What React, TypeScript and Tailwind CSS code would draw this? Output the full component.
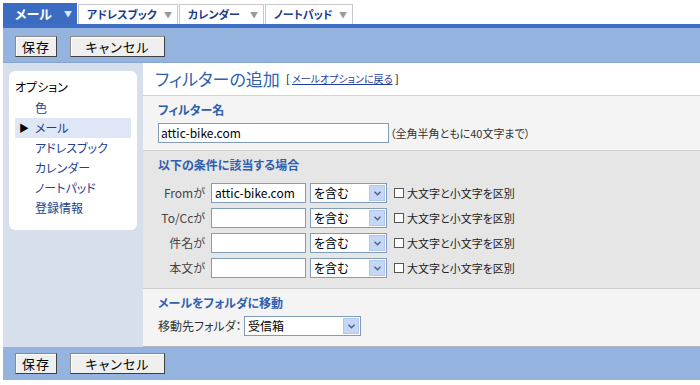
import React from "react";

const font = { fontFamily: '"Noto Sans CJK JP", "Liberation Sans", sans-serif' };

function Tab({ label, active, width }: { label: string; active?: boolean; width: string }) {
  return (
    <div
      className={
        active
          ? `${width} h-[21px] bg-[#3c6cc2] flex items-center justify-between pl-[12px] pr-[5px] text-white font-bold text-[13px] whitespace-nowrap`
          : `${width} h-[20px] bg-white border border-b-0 border-[#c8c8c8] flex items-center justify-between pl-[8px] pr-[5px] text-[#1c3a8c] font-bold text-[11px] whitespace-nowrap`
      }
    >
      <span className="leading-none">{label}</span>
      <span className={active ? "text-[8px] text-[#dce6f7]" : "text-[8px] text-[#9a9a9a]"}>▼</span>
    </div>
  );
}

function Btn({ label, width }: { label: string; width: string }) {
  return (
    <button
      className={`${width} h-[21px] bg-[#efefef] border border-[#8a8a8a] border-r-[#404040] border-b-[#404040] shadow-[inset_1px_1px_0_#ffffff] text-[13px] text-black leading-none flex items-center justify-center tracking-[1px]`}
    >
      {label}
    </button>
  );
}

function Select({ value, width }: { value: string; width: string }) {
  return (
    <div className={`${width} h-[20px] bg-white border border-[#7f9db9] flex items-center justify-between`}>
      <span className="pl-[3px] text-[12px] leading-none text-black">{value}</span>
      <span className="w-[16px] h-[16px] mr-[1px] bg-[#c6d6f7] border border-[#b2c6ee] flex items-center justify-center">
        <svg width="7" height="5" viewBox="0 0 7 5">
          <path d="M0.5 0.8 L3.5 3.8 L6.5 0.8" stroke="#4d6185" strokeWidth="1.4" fill="none" />
        </svg>
      </span>
    </div>
  );
}

function CondRow({ label, value }: { label: string; value?: string }) {
  return (
    <div className="flex items-center h-[20px]">
      <span className="w-[49px] text-right text-[12px] text-[#444] leading-none pr-[2px] whitespace-nowrap">{label}</span>
      <div className="ml-[4px] w-[95px] h-[20px] bg-white border border-[#7f9db9] flex items-center pl-[3px] text-[12px] leading-none text-black">
        {value}
      </div>
      <div className="ml-[4px]">
        <Select value="を含む" width="w-[77px]" />
      </div>
      <span className="ml-[7px] w-[10px] h-[10px] bg-white border border-[#555]" />
      <span className="ml-[3px] text-[11px] leading-none text-[#222] whitespace-nowrap">大文字と小文字を区別</span>
    </div>
  );
}

export default function App() {
  const nav = ["色", "メール", "アドレスブック", "カレンダー", "ノートパッド", "登録情報"];
  return (
    <div className="w-[700px] h-[385px] bg-white pl-[3px] overflow-hidden [font-feature-settings:'palt']" style={font}>
      <div className="h-[24px] flex items-end gap-[1px]">
        <Tab label="メール" active width="w-[74px]" />
        <Tab label="アドレスブック" width="w-[100px]" />
        <Tab label="カレンダー" width="w-[85px]" />
        <Tab label="ノートパッド" width="w-[88px]" />
      </div>

      <div className="border-t-[4px] border-t-[#3e6ec3] border-b border-b-[#88a4d0] bg-[#95b3df] h-[39px] flex items-center gap-[13px] pl-[12px] pt-[2px]">
        <Btn label="保存" width="w-[42px]" />
        <Btn label="キャンセル" width="w-[95px]" />
      </div>

      <div className="flex h-[284px]">
        <div className="w-[140px] bg-[#d7dfed] pt-[8px] pl-[6px]">
          <div className="w-[128px] h-[159px] bg-white rounded-[6px] pt-[8px] px-[6px]">
            <div className="text-[12px] text-black leading-none h-[16px] flex items-center">オプション</div>
            <div className="mt-[3px]">
              {nav.map((n) => (
                <div
                  key={n}
                  className={`h-[20px] flex items-center text-[12px] leading-none text-[#1f3f8f] ${
                    n === "メール" ? "bg-[#dfe7f6]" : ""
                  }`}
                >
                  <span className="w-[20px] pl-[4px] text-[10px] text-black">{n === "メール" ? "▶" : ""}</span>
                  {n}
                </div>
              ))}
            </div>
          </div>
        </div>

        <div className="flex-1 flex flex-col">
          <div className="h-[33px] bg-white border-b border-[#d2d2d2] flex items-center pl-[12px] gap-[6px] pb-[2px]">
            <span className="text-[17px] text-[#2f5fae] leading-none">フィルターの追加</span>
            <span className="text-[11px] text-black leading-none">
              [ <span className="text-[10px] text-[#1f3f9f] underline">メールオプションに戻る</span> ]
            </span>
          </div>

          <div className="h-[55px] bg-[#f4f4f4] border-b border-[#cfcfcf] pl-[15px] pt-[8px]">
            <div className="text-[12px] font-bold text-[#2f5fae] leading-none h-[14px]">フィルター名</div>
            <div className="flex items-center mt-[5px]">
              <div className="w-[231px] h-[20px] bg-white border border-[#7f9db9] flex items-center pl-[2px] text-[12px] leading-none text-black">
                attic-bike.com
              </div>
              <span className="ml-[1px] text-[11px] text-[#333] leading-none whitespace-nowrap">（全角半角ともに40文字まで）</span>
            </div>
          </div>

          <div className="h-[138px] bg-[#e6e6e6] border-b border-[#cfcfcf] pl-[15px] pt-[8px]">
            <div className="text-[12px] font-bold text-[#2f5fae] leading-none h-[14px]">以下の条件に該当する場合</div>
            <div className="mt-[10px] flex flex-col gap-[5px]">
              <CondRow label="Fromが" value="attic-bike.com" />
              <CondRow label="To/Ccが" />
              <CondRow label="件名が" />
              <CondRow label="本文が" />
            </div>
          </div>

          <div className="flex-1 bg-[#f4f4f4] pl-[15px] pt-[8px] border-b border-[#b5b5b5]">
            <div className="text-[12px] font-bold text-[#2f5fae] leading-none h-[14px]">メールをフォルダに移動</div>
            <div className="flex items-center mt-[5px]">
              <span className="w-[86px] text-[12px] text-[#333] leading-none whitespace-nowrap">移動先フォルダ：</span>
              <Select value="受信箱" width="w-[117px]" />
            </div>
          </div>
        </div>
      </div>

      <div className="h-[33px] bg-[#95b3df] flex items-center gap-[13px] pl-[12px]">
        <Btn label="保存" width="w-[42px]" />
        <Btn label="キャンセル" width="w-[95px]" />
      </div>
    </div>
  );
}
